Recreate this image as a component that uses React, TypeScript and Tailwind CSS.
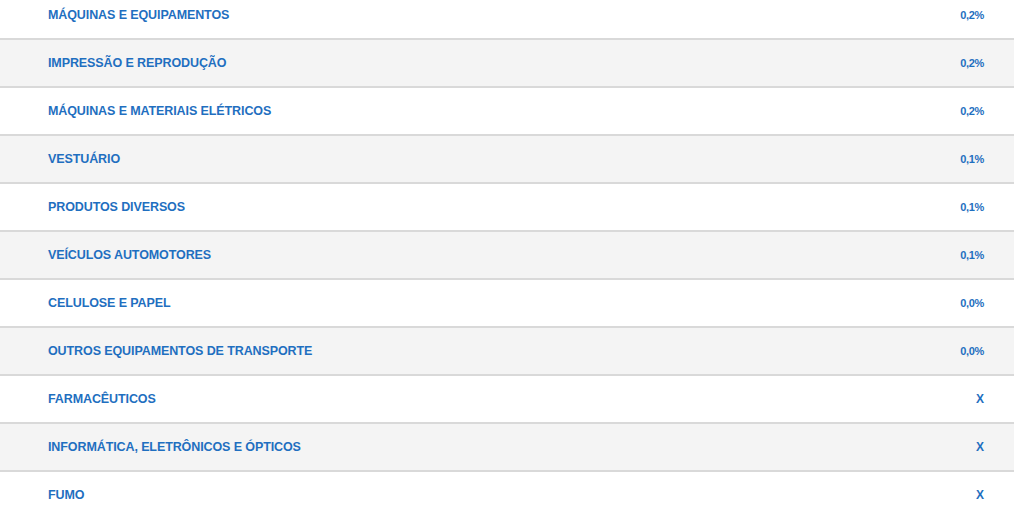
const rows: [string, string][] = [
  ["MÁQUINAS E EQUIPAMENTOS", "0,2%"],
  ["IMPRESSÃO E REPRODUÇÃO", "0,2%"],
  ["MÁQUINAS E MATERIAIS ELÉTRICOS", "0,2%"],
  ["VESTUÁRIO", "0,1%"],
  ["PRODUTOS DIVERSOS", "0,1%"],
  ["VEÍCULOS AUTOMOTORES", "0,1%"],
  ["CELULOSE E PAPEL", "0,0%"],
  ["OUTROS EQUIPAMENTOS DE TRANSPORTE", "0,0%"],
  ["FARMACÊUTICOS", "X"],
  ["INFORMÁTICA, ELETRÔNICOS E ÓPTICOS", "X"],
  ["FUMO", "X"],
];

export default function App() {
  return (
    <div className="h-[516px] w-full overflow-hidden bg-white font-['Liberation_Sans',Arial,sans-serif] text-[#1f6fc0]">
      <div className="-mt-2 flex flex-col">
        {rows.map(([name, value], i) => (
          <div
            key={name}
            className={`flex h-12 items-center justify-between border-b-2 border-[#d9d9d9] pl-12 pr-[30px] ${
              i % 2 === 1 ? "bg-[#f4f4f4]" : "bg-white"
            }`}
          >
            <span className="text-[12.5px] font-bold tracking-[-0.1px]">{name}</span>
            {value === "X" ? (
              <span className="text-[12px] font-bold">X</span>
            ) : (
              <span className="text-[11px] font-bold tracking-[-0.3px]">{value}</span>
            )}
          </div>
        ))}
      </div>
    </div>
  );
}
